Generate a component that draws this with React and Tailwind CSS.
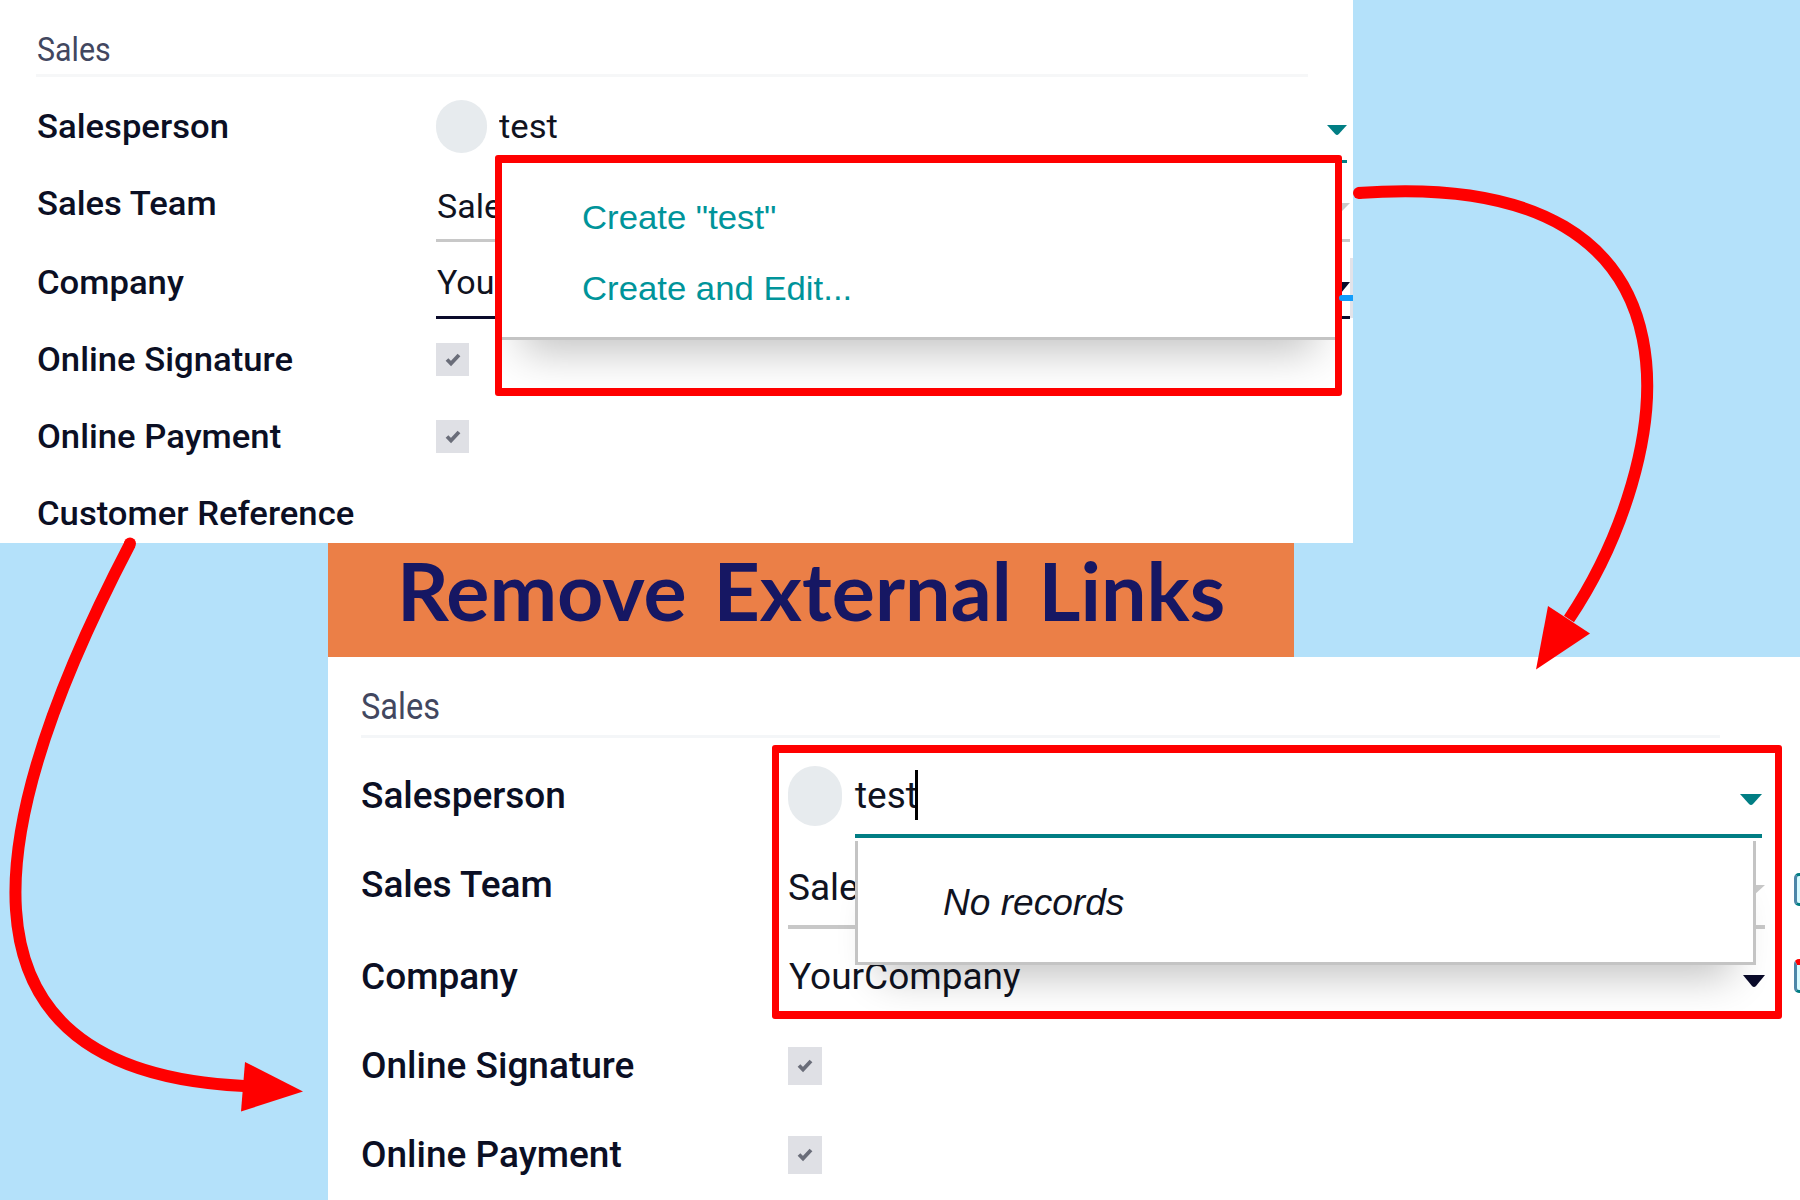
const ROBOTO = "font-['Roboto',sans-serif]";

function Caret({ className }) {
  return (
    <svg viewBox="0 0 22 11" preserveAspectRatio="none" className={className} fill="currentColor">
      <path d="M0 0H22L13 10Q11 12 9 10Z" />
    </svg>
  );
}

function Check({ className }) {
  return (
    <span className={`flex items-center justify-center bg-[#dfe0e5] ${className}`}>
      <svg viewBox="0 0 15 14" className="h-[14px] w-[16px]" fill="none" stroke="#6a6d79" strokeWidth="3.8">
        <path d="M1.5 6.5L5.5 10.5L13.5 2" />
      </svg>
    </span>
  );
}

function Label({ children, className }) {
  return <span className={`inline-block origin-left whitespace-nowrap font-medium text-[#0b0f24] ${className}`}>{children}</span>;
}

function BeforePanel() {
  const row = "flex h-[77px] items-center";
  const label = "ml-[1px] w-[399px] shrink-0 scale-x-[1.05]";
  const value = "block origin-left scale-x-[1.03] whitespace-nowrap";
  return (
    <section className={`relative h-[543px] w-[1353px] overflow-hidden bg-white pl-[36px] text-[33px] leading-none ${ROBOTO}`}>
      <header className="flex h-[77px] w-[1272px] items-end border-b-[3px] border-[#f6f7f8] pb-[8px] text-[#42475f]">
        <span className="ml-[1px] inline-block origin-left scale-x-[0.92]">Sales</span>
      </header>
      <div className={`mt-[11px] ${row}`}>
        <Label className={label}>Salesperson</Label>
        <span className="h-[53px] w-[51px] rounded-full bg-[#e7ebee]" />
        <span className="ml-[12px] inline-block origin-left scale-x-[1.05] text-[#10131f]">test</span>
        <Caret className="mt-[7px] ml-auto mr-[6px] h-[10px] w-[20px] text-[#017e84]" />
      </div>
      <div className={row}>
        <Label className={label}>Sales Team</Label>
        <span className="flex h-full flex-1 items-center border-b-[3px] border-[#c8c8c8] pt-[8px] pl-[1px] text-[#10131f]">
          <span className={value}>Sale</span>
        </span>
        <span className="w-[3px]" />
      </div>
      <div className={`mt-[2px] ${row}`}>
        <Label className={label}>Company</Label>
        <span className="flex h-[73px] flex-1 items-center border-b-[3px] border-[#0a0b2a] pt-[3px] pl-[1px] text-[#10131f]">
          <span className={value}>You</span>
        </span>
        <span className="w-[3px]" />
      </div>
      <div className={row}>
        <Label className={label}>Online Signature</Label>
        <Check className="h-[33px] w-[33px]" />
      </div>
      <div className={row}>
        <Label className={label}>Online Payment</Label>
        <Check className="h-[33px] w-[33px]" />
      </div>
      <div className={row}>
        <Label className={label}>Customer Reference</Label>
      </div>

      <span className="absolute top-[160px] left-[1330px] h-[3px] w-[17px] bg-[#017e84]" />
      <Caret className="absolute top-[203px] left-[1330px] h-[9px] w-[20px] text-[#c8c8c8]" />
      <Caret className="absolute top-[282px] left-[1330px] h-[11px] w-[20px] text-[#0a0b2a]" />
      <span className="absolute top-[258px] left-[1350px] h-[60px] w-[3px] bg-[#e3e3e9]" />

      <div className="absolute top-[155px] left-[495px] h-[241px] w-[847px] overflow-hidden rounded-[3px] border-x-[7px] border-y-[8px] border-[#ff0000] bg-white font-['Liberation_Sans',sans-serif] text-[#00949a]">
        <div className="relative flex h-[177px] flex-col items-start border-b-[3px] border-[#c4c4c4] pt-[38px] pl-[80px] shadow-[0_32px_40px_-20px_rgba(0,0,0,0.24)]">
          <span className="h-[71px] origin-left scale-x-[1.052] whitespace-nowrap">Create "test"</span>
          <span className="origin-left scale-x-[1.052] whitespace-nowrap">Create and Edit...</span>
        </div>
      </div>
      <span className="absolute top-[295px] left-[1339px] h-[6px] w-[14px] rounded-l-full bg-[#139dfb]" />
    </section>
  );
}

function AfterPanel() {
  const row = "flex h-[89px] items-center";
  const label = "w-[427px] shrink-0";
  return (
    <section className={`relative h-[543px] w-[1472px] overflow-hidden bg-white pl-[33px] text-[37px] leading-none ${ROBOTO}`}>
      <header className="flex h-[81px] w-[1359px] items-end border-b-[3px] border-[#f4f6f8] pb-[10px] text-[#42475f]">
        <span className="inline-block origin-left scale-x-[0.88]">Sales</span>
      </header>
      <div className={`mt-[13px] ${row}`}>
        <Label className={label}>Salesperson</Label>
        <span className="h-[60px] w-[54px] rounded-full bg-[#e7ebee]" />
        <span className="ml-[13px] text-[#10131f]">test</span>
        <Caret className="mt-[8px] ml-auto mr-[38px] h-[11px] w-[22px] text-[#017e84]" />
      </div>
      <div className={row}>
        <Label className={label}>Sales Team</Label>
        <span className="flex h-full w-[977px] items-center border-b-4 border-[#c8c8c8] pt-[10px] text-[#10131f]">
          <span className="whitespace-nowrap">Sale</span>
        </span>
      </div>
      <div className={`mt-[3px] ${row}`}>
        <Label className={label}>Company</Label>
        <span className="ml-[1px] text-[#10131f]">YourCompany</span>
        <Caret className="mt-[8px] ml-auto mr-[35px] h-[12px] w-[22px] text-[#0a0b2a]" />
      </div>
      <div className={row}>
        <Label className={label}>Online Signature</Label>
        <Check className="h-[38px] w-[34px]" />
      </div>
      <div className={row}>
        <Label className={label}>Online Payment</Label>
        <Check className="h-[38px] w-[34px]" />
      </div>

      <Caret className="absolute top-[228px] left-[1415px] h-[9px] w-[22px] text-[#c8c8c8]" />
      <span className="absolute top-[113px] left-[587px] h-[50px] w-[3px] bg-black" />
      <div className="absolute top-[184px] left-[527px] h-[124px] w-[901px] border-x-[3px] border-b-[3px] border-[#c4c4c4] bg-white pt-[44px] pl-[85px] font-['Liberation_Sans',sans-serif] text-[36px] text-[#10131f] italic shadow-[0_36px_40px_-24px_rgba(0,0,0,0.24)]">
        <span className="inline-block origin-left scale-x-[1.03] whitespace-nowrap">No records</span>
      </div>
      <span className="absolute top-[177px] left-[527px] h-[4px] w-[907px] bg-[#017e84]" />
      <div className="absolute top-[88px] left-[444px] h-[274px] w-[1010px] rounded-[3px] border-x-[7px] border-y-[8px] border-[#ff0000]" />
      <span className="absolute top-[216px] left-[1466px] h-[33px] w-[12px] rounded-[5px] border-[3px] border-[#017e84] border-l-[#4c86a8] bg-[#d8fbff]" />
      <span className="absolute top-[302px] left-[1466px] h-[34px] w-[12px] rounded-[5px] border-[3px] border-t-[6px] border-[#017e84] border-t-[#ff0000] border-l-[#4c86a8] bg-[#d8fbff]" />
    </section>
  );
}

function Arrows() {
  return (
    <svg className="pointer-events-none absolute inset-0" width="1800" height="1200" viewBox="0 0 1800 1200" fill="none">
      <g stroke="#ff0000" strokeWidth="12">
        <path d="M1358 193C1735 165 1670 468 1569 619" />
        <path d="M130 544C-10 812 -72 1071 244 1086" />
      </g>
      <g fill="#ff0000">
        <circle cx="1359" cy="193" r="6" />
        <circle cx="130" cy="543.500" r="6" />
        <path d="M1548 606L1590 633.5L1536 669.5Z" />
        <path d="M245 1062L303 1091.5L241 1111.5Z" />
      </g>
    </svg>
  );
}

export default function App() {
  return (
    <main className="relative flex h-[1200px] w-[1800px] flex-col overflow-hidden bg-[#b4e1fa]">
      <BeforePanel />
      <div className="ml-[328px] flex h-[114px] w-[966px] items-center bg-[#eb7f47] pl-[69px]">
        <h1 className="origin-left -translate-y-[10px] scale-x-[1.01] text-[80px] leading-none font-bold [word-spacing:7px] whitespace-nowrap text-[#161763] font-['Lato',sans-serif]">
          Remove External Links
        </h1>
      </div>
      <div className="ml-[328px]">
        <AfterPanel />
      </div>
      <Arrows />
    </main>
  );
}
